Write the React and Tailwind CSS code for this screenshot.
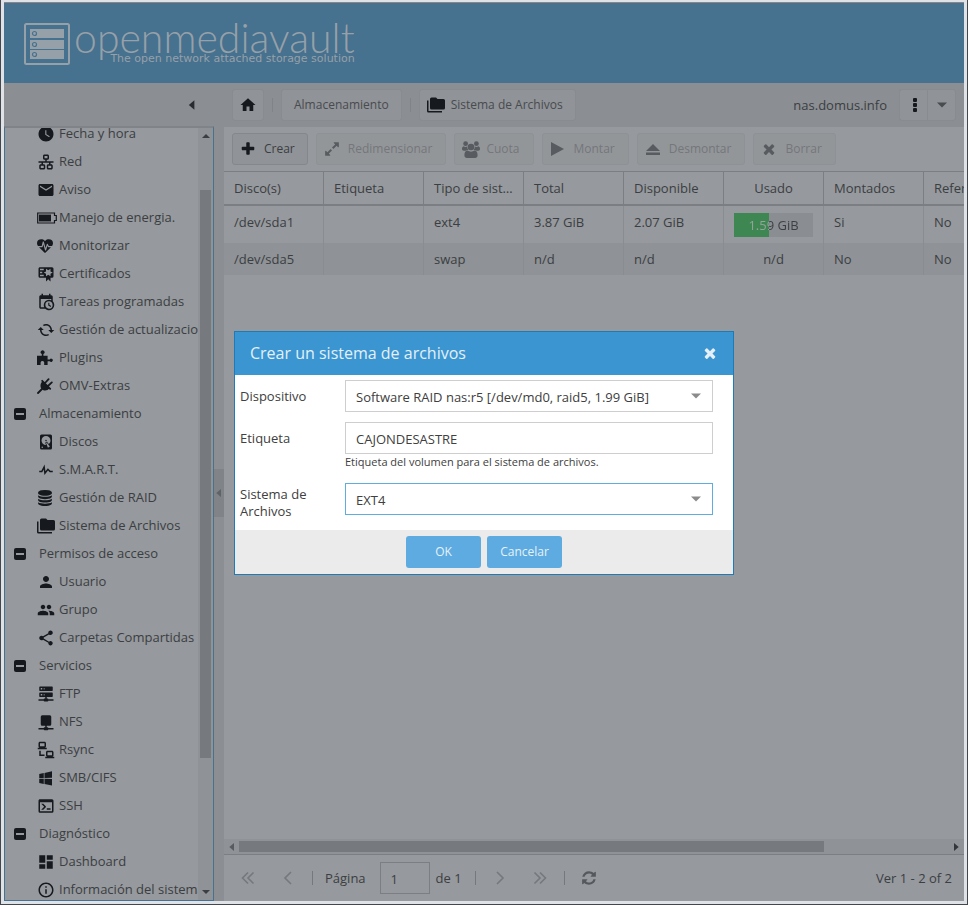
import React from "react";
import {
  MdWatchLater,
  MdEmail,
  MdCached,
  MdPerson,
  MdPeople,
  MdShare,
  MdDashboard,
  MdInfoOutline,
  MdHome,
} from "react-icons/md";

const PATHS = {
  lan: "M10,2C8.89,2 8,2.89 8,4V7C8,8.11 8.89,9 10,9H11V11H2V13H6V15H5C3.89,15 3,15.89 3,17V20C3,21.11 3.89,22 5,22H9C10.11,22 11,21.11 11,20V17C11,15.89 10.11,15 9,15H8V13H16V15H15C13.89,15 13,15.89 13,17V20C13,21.11 13.89,22 15,22H19C20.11,22 21,21.11 21,20V17C21,15.89 20.11,15 19,15H18V13H22V11H13V9H14C15.11,9 16,8.11 16,7V4C16,2.89 15.11,2 14,2H10M10,4H14V7H10V4M5,17H9V20H5V17M15,17H19V20H15V17Z",
  certificate:
    "M4,3C2.89,3 2,3.89 2,5V15A2,2 0 0,0 4,17H12V22L15,19L18,22V17H20A2,2 0 0,0 22,15V8L22,6V5A2,2 0 0,0 20,3H16V3H4M12,5L15,7L18,5V8.5L21,10L18,11.5V15L15,13L12,15V11.5L9,10L12,8.5V5M4,5H9V7H4V5M4,9H7V11H4V9M4,13H9V15H4V13Z",
  calendarClock:
    "M15,13H16.5V15.82L18.94,17.23L18.19,18.53L15,16.69V13M19,8H5V19H9.67C9.24,18.09 9,17.07 9,16A7,7 0 0,1 16,9C17.07,9 18.09,9.24 19,9.67V8M5,21C3.89,21 3,20.1 3,19V5C3,3.89 3.89,3 5,3H6V1H8V3H16V1H18V3H19A2,2 0 0,1 21,5V11.1C22.24,12.36 23,14.09 23,16A7,7 0 0,1 16,23C14.09,23 12.36,22.24 11.1,21H5M16,11.15A4.85,4.85 0 0,0 11.15,16C11.15,18.68 13.32,20.85 16,20.85A4.85,4.85 0 0,0 20.85,16C20.85,13.32 18.68,11.15 16,11.15Z",
  harddisk:
    "M6,2H18A2,2 0 0,1 20,4V20A2,2 0 0,1 18,22H6A2,2 0 0,1 4,20V4A2,2 0 0,1 6,2M12,4A6,6 0 0,0 6,10C6,13.31 8.69,16 12.1,16L11.22,13.77C10.95,13.29 11.11,12.68 11.59,12.4L12.45,11.9C12.93,11.63 13.54,11.79 13.82,12.27L15.74,14.69C17.12,13.59 18,11.9 18,10A6,6 0 0,0 12,4M12,9A1,1 0 0,1 13,10A1,1 0 0,1 12,11A1,1 0 0,1 11,10A1,1 0 0,1 12,9M7,18A1,1 0 0,0 6,19A1,1 0 0,0 7,20A1,1 0 0,0 8,19A1,1 0 0,0 7,18M12.09,13.27L14.58,19.58L17.17,18.08L12.95,12.77L12.09,13.27Z",
  pulse:
    "M3,13H5.79L10.1,4.79L11.28,13.75L14.5,9.66L17.83,13H21V15H17L14.67,12.67L9.92,18.73L8.94,11.31L7,15H3V13Z",
  folders:
    "M22,4H14L12,2H6A2,2 0 0,0 4,4V16A2,2 0 0,0 6,18H22A2,2 0 0,0 24,16V6A2,2 0 0,0 22,4M2,6H0V11H0V20A2,2 0 0,0 2,22H20V20H2V6Z",
  serverNetwork:
    "M13,18H14A1,1 0 0,1 15,19H22V21H15A1,1 0 0,1 14,22H10A1,1 0 0,1 9,21H2V19H9A1,1 0 0,1 10,18H11V16H4A1,1 0 0,1 3,15V11A1,1 0 0,1 4,10H20A1,1 0 0,1 21,11V15A1,1 0 0,1 20,16H13V18M4,2H20A1,1 0 0,1 21,3V7A1,1 0 0,1 20,8H4A1,1 0 0,1 3,7V3A1,1 0 0,1 4,2M9,6H10V4H9V6M9,14H10V12H9V14M5,4V6H7V4H5M5,12V14H7V12H5Z",
  network:
    "M15,20A1,1 0 0,0 14,19H13V17H17A2,2 0 0,0 19,15V5A2,2 0 0,0 17,3H7A2,2 0 0,0 5,5V15A2,2 0 0,0 7,17H11V19H10A1,1 0 0,0 9,20H2V22H9A1,1 0 0,0 10,23H14A1,1 0 0,0 15,22H22V20H15Z",
  lanConnect:
    "M4,1C2.89,1 2,1.89 2,3V7C2,8.11 2.89,9 4,9H1V11H13V9H10C11.11,9 12,8.11 12,7V3C12,1.89 11.11,1 10,1H4M4,3H10V7H4V3M3,13V18L3,20H10V18H5V13H3M14,13C12.89,13 12,13.89 12,15V19C12,20.11 12.89,21 14,21H11V23H23V21H20C21.11,21 22,20.11 22,19V15C22,13.89 21.11,13 20,13H14M14,15H20V19H14V15Z",
  windows:
    "M3,12V6.75L9,5.43V11.91L3,12M20,3V11.75L10,11.9V5.21L20,3M3,13L9,13.09V19.9L3,18.75V13M20,13.25V22L10,20.09V13.1L20,13.25Z",
  console:
    "M20,19V7H4V19H20M20,3A2,2 0 0,1 22,5V19A2,2 0 0,1 20,21H4A2,2 0 0,1 2,19V5C2,3.89 2.9,3 4,3H20M13,17V15H18V17H13M9.58,13L5.57,9H8.4L11.7,12.3C12.09,12.69 12.09,13.33 11.7,13.72L8.42,17H5.59L9.58,13Z",
};

const BIG_PATHS = {
  heartbeat:
    "M1280 1024h305q-5 6-10 10.5t-9 7.5l-3 4-623 600q-18 18-44 18t-44-18l-624-602q-5-2-21-20h369q22 0 39.5-13.5t22.5-34.5l70-281 190 667q6 20 23 33t39 13q21 0 38-13t23-33l146-485 56 112q18 35 57 35zm512-428q0 145-103 300h-369l-111-221q-8-17-25.5-27t-36.5-8q-45 5-56 46l-129 430-196-686q-6-20-23.5-33t-39.5-13-39 13.5-22 34.5l-116 464h-423q-103-155-103-300 0-220 127-344t351-124q62 0 126.5 21.5t120 58 95.5 68.5 76 68q36-36 76-68t95.5-68.5 120-58 126.5-21.5q224 0 351 124t127 344z",
  database:
    "M896 768q237 0 443-43t325-127v170q0 69-103 128t-280 93.5-385 34.5-385-34.5-280-93.5-103-128v-170q119 84 325 127t443 43zm0 768q237 0 443-43t325-127v170q0 69-103 128t-280 93.5-385 34.5-385-34.5-280-93.5-103-128v-170q119 84 325 127t443 43zm0-384q237 0 443-43t325-127v170q0 69-103 128t-280 93.5-385 34.5-385-34.5-280-93.5-103-128v-170q119 84 325 127t443 43zm0-1152q208 0 385 34.5t280 93.5 103 128v128q0 69-103 128t-280 93.5-385 34.5-385-34.5-280-93.5-103-128v-128q0-69 103-128t280-93.5 385-34.5z",
  refresh:
    "M1639 1056q0 5-1 7-64 268-268 434.5t-478 166.5q-146 0-282.5-55t-243.5-157l-129 129q-19 19-45 19t-45-19-19-45v-448q0-26 19-45t45-19h448q26 0 45 19t19 45-19 45l-137 137q71 66 161 102t187 36q134 0 250-65t186-179q11-17 53-117 8-23 30-23h192q13 0 22.5 9.5t9.5 22.5zm25-800v448q0 26-19 45t-45 19h-448q-26 0-45-19t-19-45 19-45l138-138q-148-137-349-137-134 0-250 65t-186 179q-11 17-53 117-8 23-30 23h-199q-13 0-22.5-9.5t-9.5-22.5v-7q65-268 270-434.5t480-166.5q146 0 284 55.5t245 156.5l130-129q19-19 45-19t45 19 19 45z",
  times:
    "M1490 1322q0 40-28 68l-136 136q-28 28-68 28t-68-28l-294-294-294 294q-28 28-68 28t-68-28l-136-136q-28-28-28-68t28-68l294-294-294-294q-28-28-28-68t28-68l136-136q28-28 68-28t68 28l294 294 294-294q28-28 68-28t68 28l136 136q28 28 28 68t-28 68l-294 294 294 294q28 28 28 68z",
  plus: "M1600 736v192q0 40-28 68t-68 28h-416v416q0 40-28 68t-68 28h-192q-40 0-68-28t-28-68v-416h-416q-40 0-68-28t-28-68v-192q0-40 28-68t68-28h416v-416q0-40 28-68t68-28h192q40 0 68 28t28 68v416h416q40 0 68 28t28 68z",
  expand:
    "M883 1056q0 13-10 23l-332 332 144 144q19 19 19 45t-19 45-45 19h-448q-26 0-45-19t-19-45v-448q0-26 19-45t45-19 45 19l144 144 332-332q10-10 23-10t23 10l114 114q10 10 10 23zm781-864v448q0 26-19 45t-45 19-45-19l-144-144-332 332q-10 10-23 10t-23-10l-114-114q-10-10-10-23t10-23l332-332-144-144q-19-19-19-45t19-45 45-19h448q26 0 45 19t19 45z",
};

function Glyph({ name, className = "size-[18px]" }) {
  return (
    <svg viewBox="0 0 24 24" fill="currentColor" aria-hidden="true" className={className}>
      <path d={PATHS[name]} />
    </svg>
  );
}

function Solid({ name, className = "size-4" }) {
  return (
    <svg viewBox="0 0 1792 1792" fill="currentColor" aria-hidden="true" className={className}>
      <path d={BIG_PATHS[name]} />
    </svg>
  );
}

function Triangle({ dir, className }) {
  const points = {
    left: "8,0 8,12 1,6",
    right: "2,0 2,12 9,6",
    up: "0,8 10,8 5,3",
    down: "0,3 10,3 5,8",
  };
  return (
    <svg
      viewBox={dir === "left" || dir === "right" ? "0 0 10 12" : "0 0 10 11"}
      fill="currentColor"
      aria-hidden="true"
      className={className}
    >
      <polygon points={points[dir]} />
    </svg>
  );
}

function Battery() {
  return (
    <svg viewBox="0 0 20 12" aria-hidden="true" className="h-3 w-5">
      <path d="M1.5 1H17.5V3.5H19.3V8.5H17.5V11H.7V1Z" fill="none" stroke="currentColor" strokeWidth="1.2" />
      <rect x="2" y="2.6" width="12" height="6.8" fill="currentColor" />
    </svg>
  );
}

function Puzzle() {
  return (
    <svg viewBox="0 0 16 16" fill="currentColor" aria-hidden="true" className="size-4">
      <path d="M0 5.8H4.8V4A1.9 1.9 0 1 1 6.4 4V5.8H10.6V9.4H12.8A1.6 1.6 0 1 1 12.8 11.2H10.6V15H7.2V12.4A1.9 1.9 0 0 0 3.6 12.4V15H0Z" />
    </svg>
  );
}

function Plug() {
  return (
    <svg viewBox="0 0 16 16" aria-hidden="true" className="size-4">
      <path d="M5.4 3.6L12.4 10.6C10.4 12.9 6.9 13.2 4.8 11.2C2.8 9.1 3.1 5.6 5.4 3.6Z" fill="currentColor" />
      <path
        d="M5.2 2.8L13.2 10.8M8 5L11.6 1.2M11 8L14.8 4.4M1 15L5 11"
        fill="none"
        stroke="currentColor"
        strokeWidth="1.8"
        strokeLinecap="round"
      />
    </svg>
  );
}

function Users() {
  return (
    <svg viewBox="0 0 18 17" fill="currentColor" aria-hidden="true" className="h-[17px] w-[18px]">
      <circle cx="3.6" cy="2.7" r="2.4" />
      <circle cx="14.4" cy="2.7" r="2.4" />
      <circle cx="9" cy="6" r="3.3" />
      <path d="M1.4 5.2C2.8 6.2 4 6.2 5.2 5.6C5.1 6.9 5.5 8 6.4 8.9C5.2 8.9 4.3 9.3 3.7 9.8H1.8C.7 9.8 0 9.1 0 8.1C0 6.6.5 5.6 1.4 5.2Z" />
      <path d="M16.6 5.2C15.2 6.2 14 6.2 12.8 5.6C12.9 6.9 12.5 8 11.6 8.9C12.8 8.9 13.7 9.3 14.3 9.8H16.2C17.3 9.8 18 9.1 18 8.1C18 6.6 17.5 5.6 16.6 5.2Z" />
      <path d="M5.3 9.6C7.6 11 10.4 11 12.7 9.6C14.8 9.9 15.6 12 15.6 14.2C15.6 15.9 14.6 17 13 17H5C3.4 17 2.4 15.9 2.4 14.2C2.4 12 3.2 9.9 5.3 9.6Z" />
    </svg>
  );
}

const MD = "size-[18px]";

const TREE = [
  { label: "Fecha y hora", icon: <MdWatchLater className={MD} /> },
  { label: "Red", icon: <Glyph name="lan" /> },
  { label: "Aviso", icon: <MdEmail className={MD} /> },
  { label: "Manejo de energia.", icon: <Battery /> },
  { label: "Monitorizar", icon: <Solid name="heartbeat" /> },
  { label: "Certificados", icon: <Glyph name="certificate" /> },
  { label: "Tareas programadas", icon: <Glyph name="calendarClock" /> },
  { label: "Gestión de actualizaciones", icon: <MdCached className="size-[18px] -scale-x-100" /> },
  { label: "Plugins", icon: <Puzzle /> },
  { label: "OMV-Extras", icon: <Plug /> },
  { label: "Almacenamiento", group: true },
  { label: "Discos", icon: <Glyph name="harddisk" /> },
  { label: "S.M.A.R.T.", icon: <Glyph name="pulse" /> },
  { label: "Gestión de RAID", icon: <Solid name="database" /> },
  { label: "Sistema de Archivos", icon: <Glyph name="folders" /> },
  { label: "Permisos de acceso", group: true },
  { label: "Usuario", icon: <MdPerson className={MD} /> },
  { label: "Grupo", icon: <MdPeople className={MD} /> },
  { label: "Carpetas Compartidas", icon: <MdShare className={MD} /> },
  { label: "Servicios", group: true },
  { label: "FTP", icon: <Glyph name="serverNetwork" /> },
  { label: "NFS", icon: <Glyph name="network" /> },
  { label: "Rsync", icon: <Glyph name="lanConnect" /> },
  { label: "SMB/CIFS", icon: <Glyph name="windows" /> },
  { label: "SSH", icon: <Glyph name="console" /> },
  { label: "Diagnóstico", group: true },
  { label: "Dashboard", icon: <MdDashboard className={MD} /> },
  { label: "Información del sistema", icon: <MdInfoOutline className={MD} /> },
];

function Header() {
  return (
    <header className="flex h-20 shrink-0 items-start bg-[#46718f] pl-5 pt-5 text-[#96a0a8]">
      <svg viewBox="0 0 46 42" aria-hidden="true" className="h-[42px] w-[46px] shrink-0">
        <rect x="1" y="1" width="44" height="40" rx="1.5" fill="none" stroke="currentColor" strokeWidth="2" />
        {[6, 17, 27].map((y) => (
          <g key={y}>
            <rect x="6" y={y} width="34" height="9" fill="currentColor" />
            <circle cx="10.5" cy={y + 4.5} r="2" fill="none" stroke="#46718f" strokeWidth="1.2" />
          </g>
        ))}
      </svg>
      <div className="ml-1 flex flex-col items-end">
        <span className="font-['Lato',sans-serif] text-[41px] font-light leading-[29px]">openmediavault</span>
        <span className="font-['DejaVu_Sans',sans-serif] text-[11px] leading-[14px]">
          The open network attached storage solution
        </span>
      </div>
    </header>
  );
}

function Sidebar() {
  return (
    <nav className="flex min-h-0 flex-1 border border-t-2 border-[#46718f] border-t-[#808388] bg-[#96999d]">
      <div className="min-w-0 flex-1 overflow-hidden">
        <ul className="-mt-2">
          {TREE.map((item) => (
            <li key={item.label}>
              <a href="#" className="flex h-7 items-center whitespace-nowrap text-[#3b3e42]">
                {item.group ? (
                  <>
                    <svg viewBox="0 0 12 12" aria-hidden="true" className="ml-[9px] mr-[13px] size-3 text-[#16191e]">
                      <rect width="12" height="12" rx="2" fill="currentColor" />
                      <rect x="2" y="5" width="8" height="2" fill="#96999d" />
                    </svg>
                    {item.label}
                  </>
                ) : (
                  <>
                    <span className="ml-8 flex w-[22px] shrink-0 items-center text-[#16191e]">{item.icon}</span>
                    {item.label}
                  </>
                )}
              </a>
            </li>
          ))}
        </ul>
      </div>
      <div className="flex w-[15px] shrink-0 flex-col items-center bg-[#8f9296] text-[#3b3e42]">
        <Triangle dir="up" className="mt-0.5 h-3 w-2" />
        <div className="mt-12 h-[568px] w-[11px] bg-[#76797d]" />
        <Triangle dir="down" className="mb-0.5 mt-auto h-3 w-2" />
      </div>
    </nav>
  );
}

const CRUMB =
  "flex h-8 items-center rounded-[3px] border border-[#888b8f] bg-[#909397] text-xs text-[#484b4f]";

function Crumbs() {
  return (
    <div className="flex h-11 shrink-0 items-center pl-2 pr-2">
      <button aria-label="Inicio" className={CRUMB + " w-8 justify-center"}>
        <MdHome className="size-[18px] text-[#16191e]" />
      </button>
      <span className="mx-2 h-3.5 w-px bg-[#808388]" />
      <button className={CRUMB + " px-3"}>Almacenamiento</button>
      <span className="mx-2 h-3.5 w-px bg-[#808388]" />
      <button className={CRUMB + " gap-1.5 pl-[7px] pr-3"}>
        <Glyph name="folders" className="size-[18px] text-[#16191e]" />
        Sistema de Archivos
      </button>
      <span className="ml-auto mr-3 pt-0.5 text-[#3b3e42]">nas.domus.info</span>
      <div className="flex">
        <button aria-label="Opciones" className={CRUMB + " w-7 justify-end rounded-r-none border-r-0 pr-2.5"}>
          <svg viewBox="0 0 4 14" aria-hidden="true" className="h-3.5 w-1 text-[#16191e]" fill="currentColor">
            <rect y="0" width="4" height="4" rx="1" />
            <rect y="5" width="4" height="4" rx="1" />
            <rect y="10" width="4" height="4" rx="1" />
          </svg>
        </button>
        <button aria-label="Abrir menú" className={CRUMB + " w-[29px] justify-center rounded-l-none"}>
          <Triangle dir="down" className="h-3 w-2.5" />
        </button>
      </div>
    </div>
  );
}

const ACTIONS = [
  { label: "Redimensionar", gap: "gap-2", icon: <Solid name="expand" /> },
  { label: "Cuota", gap: "gap-1.5", icon: <Users /> },
  {
    label: "Montar",
    gap: "gap-2",
    icon: (
      <svg viewBox="0 0 16 16" fill="currentColor" aria-hidden="true" className="size-4">
        <path d="M1 1L14 8L1 15Z" />
      </svg>
    ),
  },
  {
    label: "Desmontar",
    gap: "gap-2",
    icon: (
      <svg viewBox="0 0 16 16" fill="currentColor" aria-hidden="true" className="size-4">
        <path d="M8 3L15 10H1ZM1 11.5H15V14H1Z" />
      </svg>
    ),
  },
  { label: "Borrar", gap: "gap-2", icon: <Solid name="times" /> },
];

function Actions() {
  return (
    <div className="flex h-11 shrink-0 items-center gap-2 px-2">
      <button className="flex h-8 items-center gap-2 rounded-[3px] border border-[#84878b] bg-[#909397] pl-[7px] pr-3 text-xs text-[#3b3e42]">
        <Solid name="plus" className="size-4 text-[#16191e]" />
        Crear
      </button>
      {ACTIONS.map((a) => (
        <button
          key={a.label}
          disabled
          className={
            "flex h-8 items-center rounded-[3px] border border-[#8e9195] bg-[#939699] pl-[7px] pr-[13px] text-xs text-[#74777b] " +
            a.gap
          }
        >
          <span className="text-[#585b5f]">{a.icon}</span>
          {a.label}
        </button>
      ))}
    </div>
  );
}

const COLUMNS = ["Disco(s)", "Etiqueta", "Tipo de sistema", "Total", "Disponible", "Usado", "Montados", "Referenciado"];

function UsageBar({ percent, text }) {
  const stop = percent + "%";
  return (
    <div
      className="h-6 w-[79px]"
      style={{ background: `linear-gradient(to right, #3f8752 ${stop}, #8a8d91 ${stop})` }}
    >
      <div
        className="bg-clip-text text-center leading-6 text-transparent"
        style={{ backgroundImage: `linear-gradient(to right, #96a39b ${stop}, #3b3e42 ${stop})` }}
      >
        {text}
      </div>
    </div>
  );
}

const ROWS = [
  ["/dev/sda1", "", "ext4", "3.87 GiB", "2.07 GiB", { percent: 44, text: "1.59 GiB" }, "Si", "No"],
  ["/dev/sda5", "", "swap", "n/d", "n/d", "n/d", "No", "No"],
];

function Grid() {
  return (
    <div className="min-h-0 flex-1 overflow-hidden border-t border-[#7b7e82]">
      <table className="w-[800px] table-fixed border-separate border-spacing-0 text-left text-[#3b3e42]">
        <thead>
          <tr>
            {COLUMNS.map((c, i) => (
              <th
                key={c}
                className={
                  "h-[34px] truncate border-b-2 border-r border-[#7b7e82] px-2.5 pt-0.5 font-normal " +
                  (i === 5 ? "text-center" : "")
                }
              >
                {c}
              </th>
            ))}
          </tr>
        </thead>
        <tbody>
          {ROWS.map((row, r) => (
            <tr key={row[0]} className={r === 0 ? "h-[37px]" : "h-8 bg-[#8f9296]"}>
              {row.map((cell, i) => (
                <td
                  key={i}
                  className={
                    "border-r border-[#898c90] px-2.5 align-top leading-[17px] " +
                    (i === 5 ? "text-center " : "") +
                    (typeof cell === "object" ? "pt-[7px]" : "pt-2")
                  }
                >
                  {typeof cell === "object" ? <UsageBar percent={cell.percent} text={cell.text} /> : cell}
                </td>
              ))}
            </tr>
          ))}
        </tbody>
      </table>
    </div>
  );
}

function HorizontalScroll() {
  return (
    <div className="flex h-[15px] shrink-0 items-center bg-[#8f9296] px-1 text-[#585b5f]">
      <Triangle dir="left" className="mr-[3px] h-2 w-2" />
      <div className="flex-1">
        <div className="h-[11px] w-[82%] bg-[#76797d]" />
      </div>
      <Triangle dir="right" className="h-2 w-2 text-[#33363a]" />
    </div>
  );
}

function Chevron({ d, label }) {
  return (
    <button aria-label={label} className="flex h-8 w-6 items-center justify-center text-[#75787c]">
      <svg viewBox="0 0 14 14" fill="none" stroke="currentColor" strokeWidth="1.6" aria-hidden="true" className="size-3.5">
        <path d={d} />
      </svg>
    </button>
  );
}

function Pager() {
  return (
    <div className="flex h-[47px] shrink-0 items-center border-t border-[#7b7e82] pl-3 pr-3 text-[#3b3e42]">
      <Chevron label="Primera página" d="M7 1.5L1.5 7L7 12.5M12.5 1.5L7 7L12.5 12.5" />
      <span className="w-4" />
      <Chevron label="Página anterior" d="M10 1L4 7L10 13" />
      <span className="mx-3 h-3.5 w-px bg-[#75787c]" />
      <label htmlFor="page" className="pt-0.5">
        Página
      </label>
      <input
        id="page"
        defaultValue="1"
        className="ml-3.5 mr-1.5 h-8 w-[50px] border border-[#7b7e82] bg-[#96999d] px-2.5 pt-0.5"
      />
      <span className="pt-0.5">de 1</span>
      <span className="ml-[13px] mr-3 h-3.5 w-px bg-[#75787c]" />
      <Chevron label="Página siguiente" d="M4 1L10 7L4 13" />
      <span className="w-4" />
      <Chevron label="Última página" d="M1.5 1.5L7 7L1.5 12.5M7 1.5L12.5 7L7 12.5" />
      <span className="mx-3 h-3.5 w-px bg-[#75787c]" />
      <button aria-label="Recargar" className="flex h-8 w-6 items-center justify-center text-[#55585c]">
        <Solid name="refresh" />
      </button>
      <span className="ml-auto pt-0.5">Ver 1 - 2 of 2</span>
    </div>
  );
}

function Field({ id, label, top = "pt-2", children }) {
  return (
    <div className="flex items-start">
      <label htmlFor={id} className={"w-[105px] shrink-0 pr-4 leading-[17px] " + top}>
        {label}
      </label>
      <div className="min-w-0 flex-1">{children}</div>
    </div>
  );
}

function Select({ id, value, border }) {
  return (
    <div className="relative">
      <select
        id={id}
        defaultValue={value}
        className={"block h-8 w-full appearance-none border bg-white pl-2.5 pr-8 pt-1 outline-none " + border}
      >
        <option>{value}</option>
      </select>
      <Triangle dir="down" className="pointer-events-none absolute right-3 top-2.5 h-3 w-2.5 text-[#8b8b8b]" />
    </div>
  );
}

function CreateDialog() {
  return (
    <div className="pointer-events-none fixed inset-0 flex items-center justify-center">
      <form
        role="dialog"
        aria-labelledby="dialog-title"
        className="pointer-events-auto w-[500px] border border-[#1f7ab8] bg-white text-[#404040]"
      >
        <div className="flex h-[43px] items-center justify-between bg-[#3b95d0] pl-[15px] pr-[15px] text-[#e3f0f9]">
          <h2 id="dialog-title" className="text-base">
            Crear un sistema de archivos
          </h2>
          <button type="button" aria-label="Cerrar">
            <Solid name="times" className="size-4" />
          </button>
        </div>
        <div className="flex flex-col gap-2.5 pb-2.5 pl-[5px] pr-5 pt-[5px]">
          <Field id="device" label="Dispositivo">
            <Select
              id="device"
              value="Software RAID nas:r5 [/dev/md0, raid5, 1.99 GiB]"
              border="border-[#cecece]"
            />
          </Field>
          <Field id="volume" label="Etiqueta">
            <input
              id="volume"
              defaultValue="CAJONDESASTRE"
              className="block h-8 w-full border border-[#cecece] bg-white px-2.5 pt-0.5 outline-none"
            />
            <p className="h-[19px] text-[11px] leading-[15px]">Etiqueta del volumen para el sistema de archivos.</p>
          </Field>
          <Field id="fs" label="Sistema de Archivos" top="pt-[3px]">
            <Select id="fs" value="EXT4" border="border-[#5facdf]" />
          </Field>
        </div>
        <div className="flex h-11 items-center justify-center gap-1.5 bg-[#ebebeb] text-xs text-[#e6f2fa]">
          <button type="button" className="h-8 w-[75px] rounded-[3px] bg-[#5dabe0]">
            OK
          </button>
          <button type="button" className="h-8 w-[75px] rounded-[3px] bg-[#5dabe0]">
            Cancelar
          </button>
        </div>
      </form>
    </div>
  );
}

export default function App() {
  return (
    <div className="h-screen border-x border-b border-[#44474b] bg-[#dfe2e7] px-[3px] pb-[3px] pt-0.5 font-['Open_Sans',sans-serif] text-[13px]">
      <div className="flex h-full flex-col overflow-hidden border-t border-[#8d8488] bg-[#8b8e92]">
        <Header />
        <div className="flex min-h-0 flex-1">
          <div className="flex w-[210px] shrink-0 flex-col">
            <div className="flex h-[43px] shrink-0 items-center justify-end pr-[18px] text-[#282b2f]">
              <button aria-label="Contraer menú">
                <Triangle dir="left" className="h-2.5 w-2" />
              </button>
            </div>
            <Sidebar />
          </div>
          <div className="flex w-2.5 shrink-0 flex-col justify-center pt-0.5">
            <button aria-label="Contraer panel" className="flex h-12 items-center justify-center bg-[#808388] text-[#5f6266]">
              <Triangle dir="left" className="h-2 w-2" />
            </button>
          </div>
          <main className="flex min-w-0 flex-1 flex-col">
            <Crumbs />
            <section className="flex min-h-0 flex-1 flex-col bg-[#96999d]">
              <Actions />
              <Grid />
              <HorizontalScroll />
              <Pager />
            </section>
          </main>
        </div>
      </div>
      <CreateDialog />
    </div>
  );
}
